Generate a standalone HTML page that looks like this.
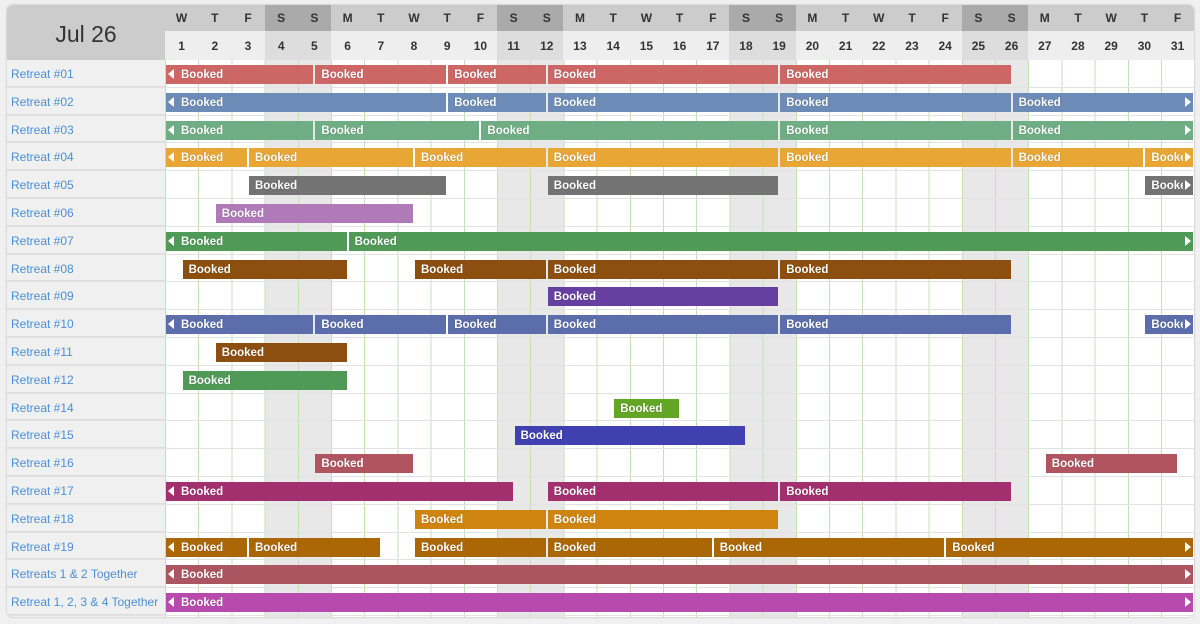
<!DOCTYPE html>
<html><head><meta charset="utf-8"><style>
*{box-sizing:border-box;margin:0;padding:0}
body{width:1200px;height:624px;background:#f0f0f0;font-family:"Liberation Sans",Arial,sans-serif;position:relative;overflow:hidden}
.wrap{position:absolute;left:7px;top:5px;width:1187px;height:612px;border-radius:6px;overflow:hidden;background:#f0f0f0;box-shadow:0 0 2px rgba(0,0,0,.25)}
.corner{position:absolute;left:0;top:0;width:158px;height:55px;background:#ccc;font-size:23px;color:#333;text-align:center;line-height:58px}
.hd{position:absolute;top:0;height:26px;width:33.2px;background:#ccc;font-weight:bold;font-size:12px;color:#333;text-align:center;line-height:27px}
.hd.w{background:#aaa}
.nm{position:absolute;top:26px;height:29px;width:33.2px;background:#eee;font-weight:bold;font-size:12px;color:#333;text-align:center;line-height:30px}
.nm.w{background:#ddd}
.grid{position:absolute;left:158px;top:55px;width:1030px;height:557px;background:
repeating-linear-gradient(to right,transparent 0 32.2px,#bfe3b5 32.2px 33.2px),
linear-gradient(to right,transparent 0 99.6px,#e8e8e8 99.6px 166px,transparent 166px 332px,#e8e8e8 332px 398.4px,transparent 398.4px 564.4px,#e8e8e8 564.4px 630.8px,transparent 630.8px 796.8px,#e8e8e8 796.8px 863.2px,transparent 863.2px),#fff;border-left:1px solid #bfe3b5}
.row{position:absolute;left:0;width:1187px;height:27.8px;border-bottom:1px solid #e2e2e2}
.lab{position:absolute;left:0;top:0;width:158px;height:100%;background:#f0f0f0;color:#4a8fd8;font-size:12px;line-height:29px;padding-left:4px;border-bottom:1px solid #ddd}
.b{position:absolute;top:5px;height:19px;left:calc(var(--a)*16.6px + 159px);width:calc((var(--b) - var(--a))*16.6px - 2px);color:#fff;font-weight:bold;font-size:11.5px;line-height:20px;padding-left:6px;white-space:nowrap;overflow:hidden;text-shadow:0 0 1px rgba(0,0,0,.35)}
.b.l{padding-left:15px}
.b.l::before{content:"";position:absolute;left:2px;top:4px;border-style:solid;border-width:5.5px 6px 5.5px 0;border-color:transparent #fff transparent transparent}
.b.r{padding-right:10px;text-overflow:clip}
.b.r::after{content:"";position:absolute;right:2px;top:4px;border-style:solid;border-width:5.5px 0 5.5px 6px;border-color:transparent transparent transparent #fff;}
.b.r span{display:block;overflow:hidden}
</style></head><body>
<div class="wrap">
<div class="corner">Jul 26</div>
<div class="hd" style="left:158px">W</div><div class="hd" style="left:191.2px">T</div><div class="hd" style="left:224.4px">F</div><div class="hd w" style="left:257.6px">S</div><div class="hd w" style="left:290.8px">S</div><div class="hd" style="left:324px">M</div><div class="hd" style="left:357.2px">T</div><div class="hd" style="left:390.4px">W</div><div class="hd" style="left:423.6px">T</div><div class="hd" style="left:456.8px">F</div><div class="hd w" style="left:490px">S</div><div class="hd w" style="left:523.2px">S</div><div class="hd" style="left:556.4px">M</div><div class="hd" style="left:589.6px">T</div><div class="hd" style="left:622.8px">W</div><div class="hd" style="left:656px">T</div><div class="hd" style="left:689.2px">F</div><div class="hd w" style="left:722.4px">S</div><div class="hd w" style="left:755.6px">S</div><div class="hd" style="left:788.8px">M</div><div class="hd" style="left:822px">T</div><div class="hd" style="left:855.2px">W</div><div class="hd" style="left:888.4px">T</div><div class="hd" style="left:921.6px">F</div><div class="hd w" style="left:954.8px">S</div><div class="hd w" style="left:988px">S</div><div class="hd" style="left:1021.2px">M</div><div class="hd" style="left:1054.4px">T</div><div class="hd" style="left:1087.6px">W</div><div class="hd" style="left:1120.8px">T</div><div class="hd" style="left:1154px">F</div>
<div class="nm" style="left:158px">1</div><div class="nm" style="left:191.2px">2</div><div class="nm" style="left:224.4px">3</div><div class="nm w" style="left:257.6px">4</div><div class="nm w" style="left:290.8px">5</div><div class="nm" style="left:324px">6</div><div class="nm" style="left:357.2px">7</div><div class="nm" style="left:390.4px">8</div><div class="nm" style="left:423.6px">9</div><div class="nm" style="left:456.8px">10</div><div class="nm w" style="left:490px">11</div><div class="nm w" style="left:523.2px">12</div><div class="nm" style="left:556.4px">13</div><div class="nm" style="left:589.6px">14</div><div class="nm" style="left:622.8px">15</div><div class="nm" style="left:656px">16</div><div class="nm" style="left:689.2px">17</div><div class="nm w" style="left:722.4px">18</div><div class="nm w" style="left:755.6px">19</div><div class="nm" style="left:788.8px">20</div><div class="nm" style="left:822px">21</div><div class="nm" style="left:855.2px">22</div><div class="nm" style="left:888.4px">23</div><div class="nm" style="left:921.6px">24</div><div class="nm w" style="left:954.8px">25</div><div class="nm w" style="left:988px">26</div><div class="nm" style="left:1021.2px">27</div><div class="nm" style="left:1054.4px">28</div><div class="nm" style="left:1087.6px">29</div><div class="nm" style="left:1120.8px">30</div><div class="nm" style="left:1154px">31</div>
<div class="grid"></div>

<div class="row" style="top:55px"><div class="lab">Retreat #01</div>
<div class="b l" style="--a:0;--b:9;background:#cd6766">Booked</div><div class="b" style="--a:9;--b:17;background:#cd6766">Booked</div><div class="b" style="--a:17;--b:23;background:#cd6766">Booked</div><div class="b" style="--a:23;--b:37;background:#cd6766">Booked</div><div class="b" style="--a:37;--b:51;background:#cd6766">Booked</div></div>

<div class="row" style="top:82.8px"><div class="lab">Retreat #02</div>
<div class="b l" style="--a:0;--b:17;background:#6c8bb6">Booked</div><div class="b" style="--a:17;--b:23;background:#6c8bb6">Booked</div><div class="b" style="--a:23;--b:37;background:#6c8bb6">Booked</div><div class="b" style="--a:37;--b:51;background:#6c8bb6">Booked</div><div class="b r" style="--a:51;--b:62;background:#6c8bb6"><span>Booked</span></div></div>

<div class="row" style="top:110.6px"><div class="lab">Retreat #03</div>
<div class="b l" style="--a:0;--b:9;background:#6fae84">Booked</div><div class="b" style="--a:9;--b:19;background:#6fae84">Booked</div><div class="b" style="--a:19;--b:37;background:#6fae84">Booked</div><div class="b" style="--a:37;--b:51;background:#6fae84">Booked</div><div class="b r" style="--a:51;--b:62;background:#6fae84"><span>Booked</span></div></div>

<div class="row" style="top:138.4px"><div class="lab">Retreat #04</div>
<div class="b l" style="--a:0;--b:5;background:#e8a634">Booked</div><div class="b" style="--a:5;--b:15;background:#e8a634">Booked</div><div class="b" style="--a:15;--b:23;background:#e8a634">Booked</div><div class="b" style="--a:23;--b:37;background:#e8a634">Booked</div><div class="b" style="--a:37;--b:51;background:#e8a634">Booked</div><div class="b" style="--a:51;--b:59;background:#e8a634">Booked</div><div class="b r" style="--a:59;--b:62;background:#e8a634"><span>Booked</span></div></div>

<div class="row" style="top:166.2px"><div class="lab">Retreat #05</div>
<div class="b" style="--a:5;--b:17;background:#737373">Booked</div><div class="b" style="--a:23;--b:37;background:#737373">Booked</div><div class="b r" style="--a:59;--b:62;background:#737373"><span>Booked</span></div></div>

<div class="row" style="top:194px"><div class="lab">Retreat #06</div>
<div class="b" style="--a:3;--b:15;background:#b07ab8">Booked</div></div>

<div class="row" style="top:221.8px"><div class="lab">Retreat #07</div>
<div class="b l" style="--a:0;--b:11;background:#4f9a57">Booked</div><div class="b r" style="--a:11;--b:62;background:#4f9a57"><span>Booked</span></div></div>

<div class="row" style="top:249.6px"><div class="lab">Retreat #08</div>
<div class="b" style="--a:1;--b:11;background:#8c4f10">Booked</div><div class="b" style="--a:15;--b:23;background:#8c4f10">Booked</div><div class="b" style="--a:23;--b:37;background:#8c4f10">Booked</div><div class="b" style="--a:37;--b:51;background:#8c4f10">Booked</div></div>

<div class="row" style="top:277.4px"><div class="lab">Retreat #09</div>
<div class="b" style="--a:23;--b:37;background:#673fa0">Booked</div></div>

<div class="row" style="top:305.2px"><div class="lab">Retreat #10</div>
<div class="b l" style="--a:0;--b:9;background:#5b6eab">Booked</div><div class="b" style="--a:9;--b:17;background:#5b6eab">Booked</div><div class="b" style="--a:17;--b:23;background:#5b6eab">Booked</div><div class="b" style="--a:23;--b:37;background:#5b6eab">Booked</div><div class="b" style="--a:37;--b:51;background:#5b6eab">Booked</div><div class="b r" style="--a:59;--b:62;background:#5b6eab"><span>Booked</span></div></div>

<div class="row" style="top:333px"><div class="lab">Retreat #11</div>
<div class="b" style="--a:3;--b:11;background:#8c4f10">Booked</div></div>

<div class="row" style="top:360.8px"><div class="lab">Retreat #12</div>
<div class="b" style="--a:1;--b:11;background:#4f9a57">Booked</div></div>

<div class="row" style="top:388.6px"><div class="lab">Retreat #14</div>
<div class="b" style="--a:27;--b:31;background:#63a624">Booked</div></div>

<div class="row" style="top:416.4px"><div class="lab">Retreat #15</div>
<div class="b" style="--a:21;--b:35;background:#4040b0">Booked</div></div>

<div class="row" style="top:444.2px"><div class="lab">Retreat #16</div>
<div class="b" style="--a:9;--b:15;background:#b05560">Booked</div><div class="b" style="--a:53;--b:61;background:#b05560">Booked</div></div>

<div class="row" style="top:472px"><div class="lab">Retreat #17</div>
<div class="b l" style="--a:0;--b:21;background:#a2306f">Booked</div><div class="b" style="--a:23;--b:37;background:#a2306f">Booked</div><div class="b" style="--a:37;--b:51;background:#a2306f">Booked</div></div>

<div class="row" style="top:499.8px"><div class="lab">Retreat #18</div>
<div class="b" style="--a:15;--b:23;background:#d08410">Booked</div><div class="b" style="--a:23;--b:37;background:#d08410">Booked</div></div>

<div class="row" style="top:527.6px"><div class="lab">Retreat #19</div>
<div class="b l" style="--a:0;--b:5;background:#ab6606">Booked</div><div class="b" style="--a:5;--b:13;background:#ab6606">Booked</div><div class="b" style="--a:15;--b:23;background:#ab6606">Booked</div><div class="b" style="--a:23;--b:33;background:#ab6606">Booked</div><div class="b" style="--a:33;--b:47;background:#ab6606">Booked</div><div class="b r" style="--a:47;--b:62;background:#ab6606"><span>Booked</span></div></div>

<div class="row" style="top:555.4px"><div class="lab">Retreats 1 &amp; 2 Together</div>
<div class="b l r" style="--a:0;--b:62;background:#aa5560"><span>Booked</span></div></div>

<div class="row" style="top:583.2px"><div class="lab">Retreat 1, 2, 3 &amp; 4 Together</div>
<div class="b l r" style="--a:0;--b:62;background:#b84aae"><span>Booked</span></div></div>
</div>
</body></html>
